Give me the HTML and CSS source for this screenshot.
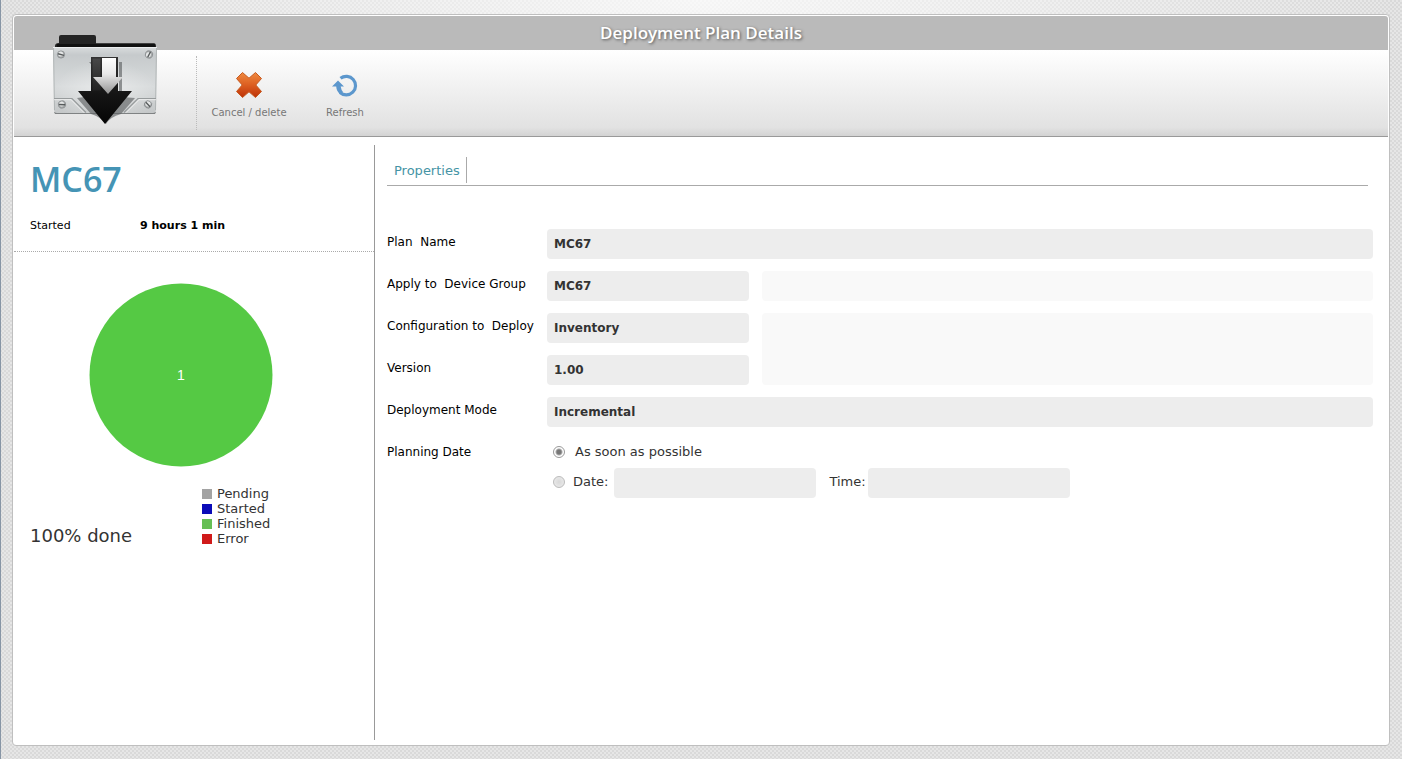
FILE: index.html
```html
<!DOCTYPE html>
<html lang="en">
<head>
<meta charset="utf-8">
<title>Deployment Plan Details</title>
<link rel="stylesheet" href="styles.css">
</head>
<body>
<div class="panel">
  <header class="title-bar"><h1 class="title">Deployment Plan Details</h1></header>
  <div class="toolbar">
    <div class="logo">
      <svg class="logo-icon" width="112" height="94" viewBox="0 0 112 94" aria-hidden="true">
        <defs>
          <linearGradient id="plate" x1="0" y1="0" x2="0" y2="1"><stop offset="0" stop-color="#d9dcdd"/><stop offset=".12" stop-color="#c6cacc"/><stop offset=".6" stop-color="#d8dbdc"/><stop offset="1" stop-color="#c4c7c8"/></linearGradient>
          <radialGradient id="shine" cx=".5" cy=".7" r=".5"><stop offset="0" stop-color="#fff" stop-opacity=".45"/><stop offset="1" stop-color="#fff" stop-opacity="0"/></radialGradient>
          <linearGradient id="dark" x1="0" y1="0" x2="0" y2="1"><stop offset="0" stop-color="#333"/><stop offset=".55" stop-color="#151515"/><stop offset="1" stop-color="#050505"/></linearGradient>
          <linearGradient id="shaft" x1="0" y1="0" x2="0" y2="1"><stop offset="0" stop-color="#484848"/><stop offset="1" stop-color="#222"/></linearGradient>
          <linearGradient id="silver" x1="0" y1="0" x2="0" y2="1"><stop offset="0" stop-color="#fff"/><stop offset=".45" stop-color="#e8e8e8"/><stop offset="1" stop-color="#929292"/></linearGradient>
          <g id="screw"><circle r="3.6" fill="#a9acad" stroke="#85898b" stroke-width=".8"/><circle r="2.5" cx="-.3" cy="-.5" fill="#e5e7e7"/><path d="M-3 -.7L3 .9" stroke="#565a5b" stroke-width="1.4"/></g>
        </defs>
        <path d="M9 4q0-2 2-2h33q2 0 2 2v6h57q3 0 3 3v7H5v-7q0-3 4-3z" fill="#242424"/>
        <path d="M46 10.500h58" stroke="#3f3f3f"/><path d="M7 11h98v4H7z" fill="#111"/>
        <path d="M4 79h102l-1 2H5z" fill="#7f8283"/>
        <path d="M3 14h104v2l-1 61q0 3-3 3H7q-3 0-3-3L3 16z" fill="url(#plate)"/>
        <path d="M3 14h104l-1 66H4z" fill="url(#shine)"/>
        <path d="M3 14.500h104" stroke="#eceeef"/><path d="M3.500 15l1 62M106.500 15l-1 62" stroke="#aaaeaf" stroke-width=".8" fill="none"/>
        <path d="M4 65.500h18l14 14M106 65.500H88l-14 14" fill="none" stroke="#979b9c" stroke-width="1.200"/>
        <path d="M4 66.700h17l13 13M106 66.700H89l-13 13" fill="none" stroke="#f2f3f3" stroke-width=".8"/>
        <path d="M39 29h3v34l-15 2 14 16q10 3 15 10 4-7 15-10l14-16-13-1V29h-3v33z" fill="#606364" opacity=".65"/>
        <path d="M41 24h27v34h14L55 91 28 58h13z" fill="url(#dark)"/>
        <path d="M42.500 25.500h8v32h-8z" fill="url(#shaft)"/>
        <path d="M52 25h14v19h7L58 61 43 44h9z" fill="url(#silver)"/>
        <use href="#screw" x="11" y="21.500"/>
        <use href="#screw" transform="translate(99 21.500) rotate(-78)"/>
        <use href="#screw" transform="translate(12 71.500) rotate(-12)"/>
        <use href="#screw" transform="translate(98 71.500) rotate(32)"/>
      </svg>
    </div>
    <div class="actions">
      <button class="action" type="button">
        <svg width="28" height="28" viewBox="0 0 28 28" aria-hidden="true">
          <defs><linearGradient id="cross" x1="0" y1="0" x2="0" y2="1"><stop offset="0" stop-color="#ef8a40"/><stop offset=".48" stop-color="#dd6022"/><stop offset="1" stop-color="#bd3208"/></linearGradient></defs>
          <path d="M7.500 1.500l6.500 5.700 6.500-5.700 6 6-5.700 6.500 5.700 6.500-6 6-6.500-5.700-6.500 5.700-6-6L7.200 14 1.500 7.500z" fill="url(#cross)" stroke="#c65a20" stroke-width="1" stroke-linejoin="round"/>
        </svg>
        <span>Cancel / delete</span>
      </button>
      <button class="action" type="button">
        <svg width="28" height="28" viewBox="0 0 28 28" aria-hidden="true">
          <path d="M9.500 7.300A9.300 9.300 0 1 1 9 21.500" fill="none" stroke="#5c97cd" stroke-width="3.200"/>
          <path d="M7 9.500l6 6H9.700q.5 3.500 2.300 5.500l-3 2Q5.500 20 5.200 15.500H1z" fill="#5c97cd"/>
        </svg>
        <span>Refresh</span>
      </button>
    </div>
  </div>
  <main class="content">
    <aside class="summary">
      <h2 class="plan">MC67</h2>
      <dl class="elapsed"><dt>Started</dt><dd>9 hours 1 min</dd></dl>
      <div class="chart">
        <svg class="pie" width="184" height="184" viewBox="0 0 184 184" role="img" aria-label="1 finished">
          <circle cx="92" cy="92" r="91.500" fill="#55c944"/>
          <text class="pie-label" x="92" y="97" text-anchor="middle">1</text>
        </svg>
      </div>
      <div class="status">
        <p class="progress">100% done</p>
        <ul class="legend">
          <li><span class="swatch pending"></span>Pending</li>
          <li><span class="swatch started"></span>Started</li>
          <li><span class="swatch finished"></span>Finished</li>
          <li><span class="swatch error"></span>Error</li>
        </ul>
      </div>
    </aside>
    <section class="details">
      <nav class="tabs"><a class="tab" href="#properties">Properties</a></nav>
      <form class="form" id="properties">
        <label class="name" for="plan">Plan&nbsp; Name</label>
        <input class="field wide" id="plan" value="MC67" readonly>
        <label class="name" for="group">Apply to&nbsp; Device Group</label>
        <input class="field" id="group" value="MC67" readonly>
        <div class="note"></div>
        <label class="name" for="config">Configuration to&nbsp; Deploy</label>
        <input class="field" id="config" value="Inventory" readonly>
        <div class="note tall"></div>
        <label class="name" for="version">Version</label>
        <input class="field" id="version" value="1.00" readonly>
        <label class="name" for="mode">Deployment Mode</label>
        <input class="field wide" id="mode" value="Incremental" readonly>
        <span class="name" id="planning">Planning Date</span>
        <div class="planning wide" role="radiogroup" aria-labelledby="planning">
          <div class="choice soon">
            <input class="radio" type="radio" name="when" id="asap" checked>
            <label for="asap">As soon as possible</label>
          </div>
          <div class="choice">
            <input class="radio" type="radio" name="when" id="scheduled">
            <label for="scheduled">Date:</label>
            <input class="field slot" aria-label="Date" readonly>
            <div class="time">
              <label for="time">Time:</label>
              <input class="field slot" id="time" readonly>
            </div>
          </div>
        </div>
      </form>
    </section>
  </main>
</div>
</body>
</html>
```
FILE: styles.css
```css
* {
  box-sizing: border-box;
}

body {
  margin: 0;
  min-height: 100vh;
  padding: 14px 12px 13px 11px;
  border-left: 1px solid #8795a5;
  display: flex;
  font-family: Verdana, "DejaVu Sans", sans-serif;
  font-size: 13px;
  color: #333;
  background:
    radial-gradient(ellipse 700px 160px at 50% 0, rgba(255, 255, 255, 0.75), rgba(255, 255, 255, 0)),
    conic-gradient(#d9d9d9 25%, transparent 0 50%, #d9d9d9 0 75%, transparent 0) 0 0 / 4px 4px,
    #e6e6e6;
}

h1, h2, p, ul, dl, dd {
  margin: 0;
  padding: 0;
}

.panel {
  flex: 1;
  display: flex;
  flex-direction: column;
  min-width: 0;
  padding: 1px;
  border: 1px solid #bfbfbf;
  border-radius: 4px;
  background: #fff;
}

.title-bar {
  height: 34px;
  border-radius: 3px 3px 0 0;
  background: #bababa;
  text-align: center;
}

.title {
  font: 600 17px/34px "Open Sans", sans-serif;
  color: #fff;
  text-shadow: 1px 1px 3px #555;
}

.toolbar {
  display: flex;
  height: 87px;
  border-bottom: 1px solid #999;
  background: linear-gradient(#fff, #e2e2e2 90%, #d3d3d3);
}

.logo {
  width: 183px;
  margin: 6px 0;
  padding-left: 36px;
  border-right: 1px dotted #bbb;
}

.logo-icon {
  display: block;
  margin-top: -23px;
}

.actions {
  display: flex;
  padding: 21px 0 0 4px;
}

.action {
  display: flex;
  flex-direction: column;
  align-items: center;
  gap: 8px;
  width: 96px;
  padding: 0;
  border: 0;
  background: none;
  font: 10px/12px Verdana, "DejaVu Sans", sans-serif;
  color: #777;
}

.content {
  flex: 1;
  display: flex;
  padding: 8px 15px 4px 0;
}

.summary {
  width: 361px;
  border-right: 1px solid #999;
}

.plan {
  padding: 12px 16px 0;
  font: 600 34px/44px "Open Sans", sans-serif;
  color: #4594b5;
}

.elapsed {
  display: flex;
  padding: 17px 16px;
  border-bottom: 1px dotted #aaa;
  font-size: 11px;
  line-height: 16px;
  color: #000;
}

.elapsed dt {
  width: 110px;
}

.elapsed dd {
  font-weight: 700;
}

.chart {
  padding: 31px 0 0 75px;
}

.pie {
  display: block;
}

.pie-label {
  font: 14px "Liberation Sans", sans-serif;
  fill: #fff;
}

.status {
  display: flex;
  align-items: flex-end;
  padding: 19px 16px 0;
}

.progress {
  width: 172px;
  font-size: 18px;
  line-height: 20px;
}

.legend {
  list-style: none;
  line-height: 15px;
}

.legend li {
  display: flex;
  align-items: center;
  gap: 5px;
}

.swatch {
  width: 10px;
  height: 10px;
}

.pending { background: #a3a3a3; }
.started { background: #0b0bb8; }
.finished { background: #66bf55; }
.error { background: #d01a1a; }

.details {
  flex: 1;
  min-width: 0;
  padding: 12px 0 0 12px;
}

.tabs {
  display: flex;
  height: 29px;
  margin-right: 5px;
  border-bottom: 1px solid #aaa;
}

.tab {
  height: 26px;
  padding: 0 6px 0 7px;
  border-right: 1px solid #aaa;
  line-height: 27px;
  color: #4594a5;
  text-decoration: none;
}

.form {
  display: grid;
  grid-template-columns: 147px 202px 1fr;
  gap: 12px 13px;
  padding-top: 43px;
}

.name {
  font-size: 12px;
  line-height: 26px;
  color: #000;
  white-space: nowrap;
}

.field {
  width: 100%;
  height: 30px;
  padding: 0 7px;
  border: 0;
  border-radius: 4px;
  background: #ededed;
  font: 700 12px Verdana, "DejaVu Sans", sans-serif;
  color: #333;
}

.wide {
  grid-column: 2 / -1;
}

.note {
  border-radius: 4px;
  background: #f9f9f9;
}

.tall {
  grid-row: span 2;
}

.planning {
  padding-left: 6px;
}

.choice {
  display: flex;
  align-items: center;
  line-height: 26px;
  gap: 6px;
}

.choice label {
  padding-bottom: 2px;
}

.soon {
  height: 29px;
  gap: 8px;
}

.soon label {
  padding-bottom: 4px;
}

.radio {
  appearance: none;
  width: 12px;
  height: 12px;
  margin: 0 2px 2px 0;
  border: 1px solid #bbb;
  border-radius: 50%;
  background: radial-gradient(#d8d8d8, #eee);
}

.soon .radio {
  margin-bottom: 4px;
}

.radio:checked {
  border-color: #999;
  background: radial-gradient(circle, #777 0 2px, #aaa 3px, #fff 4px);
}

.slot {
  width: 202px;
}

.time {
  display: flex;
  align-items: center;
  gap: 2px;
  margin-left: 7px;
}
```
